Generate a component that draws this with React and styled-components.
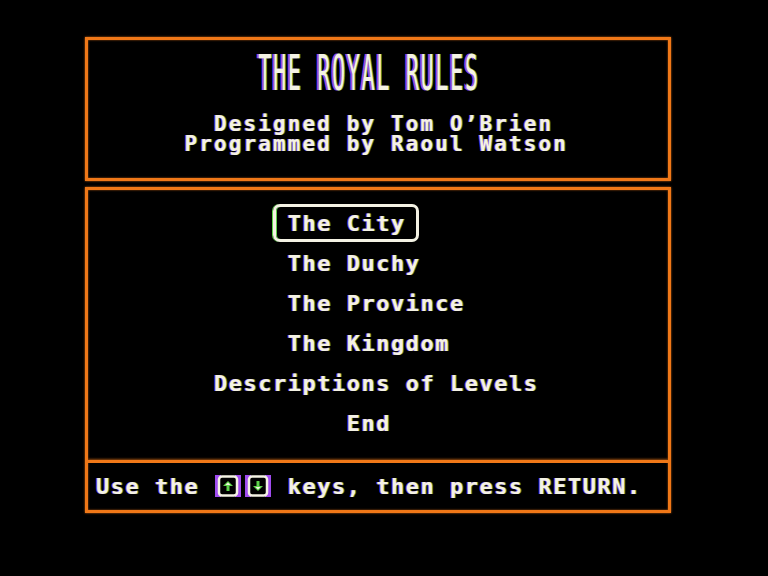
import React from 'react'
import styled, { createGlobalStyle } from 'styled-components'

const ORANGE = '#f07818'
const INK = '#f4f2e4'
const PITCH = 14.75

const GlobalStyle = createGlobalStyle`
  html, body {
    margin: 0;
    padding: 0;
    background: #000;
  }
  body {
    width: 768px;
    height: 576px;
    overflow: hidden;
    font-family: "DejaVu Sans Mono", "Liberation Mono", monospace;
  }
`

const Screen = styled.div`
  width: 768px;
  height: 576px;
  background: #000;
  padding: 37px 0 0 85px;
  box-sizing: border-box;
`

const Frame = styled.div`
  width: 586px;
  display: flex;
  flex-direction: column;
  gap: 6px;
`

const Box = styled.div`
  box-sizing: border-box;
  height: ${(p) => p.$h}px;
  border: 3px solid ${ORANGE};
  box-shadow: 0 0 2px rgba(240, 120, 24, 0.8), inset 0 0 2px rgba(240, 120, 24, 0.8);
  display: flex;
  flex-direction: column;
  padding-left: 8px;
`

// text sits on a 40-column character grid, $col is the starting column
const Text = styled.div`
  color: ${INK};
  font-weight: bold;
  font-size: 22px;
  letter-spacing: ${PITCH - 13.244}px;
  white-space: pre;
  margin-left: ${(p) => (p.$col || 0) * PITCH}px;
  text-shadow: -1px 0 rgba(176, 84, 255, 0.85), 1px 0 rgba(96, 214, 64, 0.6);
`

const Title = styled(Text)`
  margin-top: 14px;
  height: 40px;
  line-height: 40px;
  font-weight: normal;
  transform: scaleY(2.3);
  transform-origin: left center;
  text-shadow: -2px 0 rgba(176, 84, 255, 0.9), 1px 0 rgba(96, 214, 64, 0.7);
`

const Credits = styled.div`
  margin-top: 20px;
  display: flex;
  flex-direction: column;
`

const CreditLine = styled(Text)`
  font-size: 21px;
  letter-spacing: ${PITCH - 12.642}px;
  line-height: 20px;
  height: 20px;
`

const Menu = styled.div`
  height: 270px;
  box-sizing: border-box;
  padding-top: 14px;
  display: flex;
  flex-direction: column;
  align-items: flex-start;
`

const Item = styled(Text)`
  position: relative;
  height: 40px;
  line-height: 40px;

  ${(p) =>
    p.$active &&
    `
    &::before {
      content: '';
      position: absolute;
      left: -15px;
      right: -13px;
      top: 0;
      bottom: 2px;
      border: 3px solid ${INK};
      border-radius: 7px;
      box-shadow: -1px 0 0 #5cd24a, inset 1px 0 0 #5cd24a;
    }
  `}
`

const Footer = styled.div`
  flex: 1;
  margin-left: -8px;
  border-top: 3px solid ${ORANGE};
  box-shadow: 0 -1px 2px rgba(240, 120, 24, 0.6);
  display: flex;
  align-items: center;
  padding-left: 8px;
`

const KeyCap = styled.span`
  display: inline-flex;
  width: ${PITCH * 2}px;
  height: 24px;
  vertical-align: middle;
  align-items: center;
  justify-content: flex-start;
  position: relative;
  top: -2px;
`

const Key = ({ dir }) => (
  <KeyCap>
    <svg width="28" height="24" viewBox="0 0 28 24">
      <rect x="1" y="1" width="6" height="22" fill="#a04cf0" />
      <rect x="21" y="1" width="6" height="22" fill="#a04cf0" />
      <rect x="5" y="2.5" width="18" height="19" rx="3" fill="#000" stroke={INK} strokeWidth="2.5" />
      {dir === 'up' ? (
        <>
          <path d="M14 7 L19 12 L9 12 Z" fill="#5cd24a" />
          <rect x="12.5" y="11" width="3" height="6" fill="#5cd24a" />
          <path d="M14 8.5 L16.5 11 L11.5 11 Z" fill={INK} />
        </>
      ) : (
        <>
          <path d="M14 17 L19 12 L9 12 Z" fill="#5cd24a" />
          <rect x="12.5" y="7" width="3" height="6" fill="#5cd24a" />
          <path d="M14 15.5 L16.5 13 L11.5 13 Z" fill={INK} />
        </>
      )}
    </svg>
  </KeyCap>
)

const items = [
  { label: 'The City', col: 13, active: true },
  { label: 'The Duchy', col: 13 },
  { label: 'The Province', col: 13 },
  { label: 'The Kingdom', col: 13 },
  { label: 'Descriptions of Levels', col: 8 },
  { label: 'End', col: 17 },
]

export default function App() {
  return (
    <Screen>
      <GlobalStyle />
      <Frame>
        <Box $h={144}>
          <Title $col={11}>THE ROYAL RULES</Title>
          <Credits>
            <CreditLine $col={8}>Designed by Tom O’Brien</CreditLine>
            <CreditLine $col={6}>Programmed by Raoul Watson</CreditLine>
          </Credits>
        </Box>
        <Box $h={326}>
          <Menu>
            {items.map((it) => (
              <Item key={it.label} $col={it.col} $active={it.active}>
                {it.label}
              </Item>
            ))}
          </Menu>
          <Footer>
            <Text>
              {'Use the '}
              <Key dir="up" />
              <Key dir="down" />
              {' keys, then press RETURN.'}
            </Text>
          </Footer>
        </Box>
      </Frame>
    </Screen>
  )
}
